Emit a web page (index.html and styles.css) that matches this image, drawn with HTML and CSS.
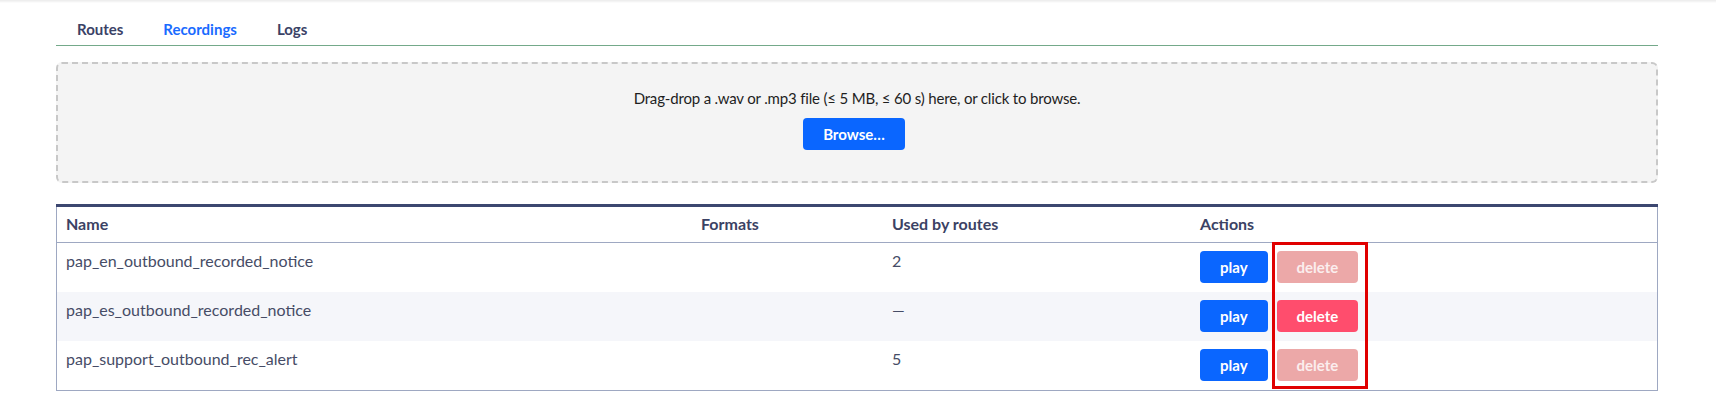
FILE: index.html
```html
<html>
  <head>
    <meta charset="utf-8">
    <link rel="stylesheet" href="styles.css">
  </head>
  <body>
    <div class="top-edge"></div>
    <div class="page">
      <!-- tabs -->
      <nav class="tabs">
        <a class="tab">Routes</a>
        <a class="tab active">Recordings</a>
        <a class="tab">Logs</a>
      </nav>

      <!-- upload area -->
      <div class="dropzone">
        <p class="dropzone-hint">Drag-drop a .wav or .mp3 file (≤ 5 MB, ≤ 60 s) here, or click to browse.</p>
        <button class="btn btn-primary btn-browse">Browse…</button>
      </div>

      <!-- recordings list -->
      <div class="table-wrap">
        <table class="recordings">
          <thead>
            <tr>
              <th class="col-name">Name</th>
              <th class="col-formats">Formats</th>
              <th class="col-used">Used by routes</th>
              <th class="col-actions">Actions</th>
            </tr>
          </thead>
          <tbody>
            <tr>
              <td>pap_en_outbound_recorded_notice</td>
              <td></td>
              <td>2</td>
              <td>
                <div class="actions">
                  <button class="btn btn-primary">play</button>
                  <button class="btn btn-delete" disabled>delete</button>
                </div>
              </td>
            </tr>
            <tr>
              <td>pap_es_outbound_recorded_notice</td>
              <td></td>
              <td>—</td>
              <td>
                <div class="actions">
                  <button class="btn btn-primary">play</button>
                  <button class="btn btn-delete">delete</button>
                </div>
              </td>
            </tr>
            <tr>
              <td>pap_support_outbound_rec_alert</td>
              <td></td>
              <td>5</td>
              <td>
                <div class="actions">
                  <button class="btn btn-primary">play</button>
                  <button class="btn btn-delete" disabled>delete</button>
                </div>
              </td>
            </tr>
          </tbody>
        </table>
        <div class="delete-outline"></div>
      </div>
    </div>
  </body>
</html>
```

FILE: styles.css
```css
html {
  height: 100%;
}
body {
  margin: 0;
  padding: 0;
  font-family: "Lato", "Open Sans", sans-serif;
  font-size: 15px;
  line-height: 20px;
  color: #222;
  background-color: #fff;
}
.top-edge {
  height: 3px;
  background: linear-gradient(#ebebeb, #f7f7f7 2px, #fff);
}
.page {
  margin: 0 58px 0 56px;
}

/* tabs */
.tabs {
  display: flex;
  border-bottom: 1px solid #74a98a;
}
.tab {
  padding: 16px 20px 6px;
  font-weight: 700;
  color: #3a4266;
  cursor: pointer;
}
.tab:first-child {
  padding-left: 21px;
}
.tab.active {
  color: #1a6bff;
}

/* upload area */
.dropzone {
  margin-top: 16px;
  padding: 24px 16px 31px;
  background-color: #f4f4f4;
  border: 2px dashed #c8c8c8;
  border-radius: 6px;
  display: flex;
  flex-direction: column;
  align-items: center;
}
.dropzone-hint {
  margin: 0 0 10px;
  color: #1e1e1e;
  letter-spacing: -0.17px;
}
.btn-browse {
  margin-right: 6px;
}

/* buttons */
.btn {
  height: 32px;
  padding: 0 20px;
  border: none;
  border-radius: 4px;
  font-family: inherit;
  font-size: 15px;
  font-weight: 700;
  color: #fff;
  cursor: pointer;
}
.btn-primary {
  background-color: #0a66ff;
}
.btn-delete {
  background-color: #ff4d6d;
}
.btn-delete:disabled {
  background-color: #eca8a8;
  color: #fbeeee;
  cursor: default;
}

/* table */
.table-wrap {
  position: relative;
  margin-top: 21px;
}
.recordings {
  width: 100%;
  border-collapse: collapse;
  border: 1px solid #9ea8c2;
  border-top: 3px solid #3c4770;
}
.recordings th {
  text-align: left;
  font-weight: 700;
  color: #3b4264;
  padding: 7px 9px 9px;
  border-bottom: 1px solid #9ea8c2;
}
.recordings td {
  vertical-align: top;
  padding: 8px 9px 9px;
  color: #464c66;
}
.recordings tbody tr:nth-child(even) {
  background-color: #f5f6fa;
}
.col-name {
  width: 617px;
}
.col-formats {
  width: 173px;
}
.col-used {
  width: 290px;
}
.actions {
  display: flex;
  gap: 9px;
}

/* outline drawn round the delete buttons */
.delete-outline {
  position: absolute;
  left: 1216px;
  top: 38px;
  width: 90px;
  height: 141px;
  border: 3px solid #e00000;
  pointer-events: none;
}
```
